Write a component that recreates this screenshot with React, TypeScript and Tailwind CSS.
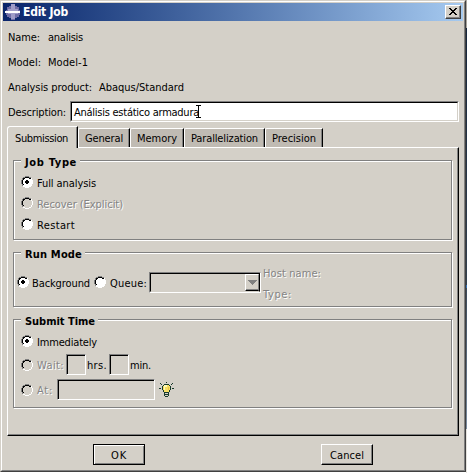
import { useLayoutEffect, useRef, useState } from "react";
import type { ReactNode } from "react";

const SUNKEN =
  "border border-t-[#808080] border-l-[#808080] border-r-white border-b-white";

/** A single line of text, tracked so that it takes up `w` pixels. */
function Label({ w, className = "", children }: { w: number; className?: string; children: string }) {
  const ref = useRef<HTMLSpanElement>(null);
  const [spacing, setSpacing] = useState(0);
  useLayoutEffect(() => {
    if (ref.current) {
      const natural = ref.current.getBoundingClientRect().width - spacing * children.length;
      setSpacing((w - natural) / children.length);
    }
  }, [w, children]);
  return (
    <span
      ref={ref}
      className={`inline-block h-[14px] shrink-0 whitespace-nowrap leading-[16px] ${className}`}
      style={{ letterSpacing: spacing }}
    >
      {children}
    </span>
  );
}

const DISABLED = "text-[#848484] [text-shadow:1px_1px_0_#fff]";

function Radio({ checked = false, disabled = false }: { checked?: boolean; disabled?: boolean }) {
  return (
    <svg width="12" height="12" viewBox="0 0 12 12" className="shrink-0" shapeRendering="crispEdges">
      <path d="M4 1h4v1h2v2h1v4h-1v2h-2v1h-4v-1h-2v-2h-1v-4h1v-2h2z" fill={disabled ? "#d4d0c8" : "#fff"} />
      <path d="M4 0h4v1h-4zM2 1h2v1h-2zM8 1h2v1h-2zM1 2h1v2h-1zM0 4h1v4h-1zM1 8h1v2h-1z" fill="#808080" />
      <path d="M4 1h4v1h-4zM2 2h2v1h-2zM8 2h2v1h-2zM2 3h1v1h-1zM1 4h1v4h-1zM2 8h1v1h-1z" fill="#000" />
      <path d="M10 2h1v2h-1zM11 4h1v4h-1zM10 8h1v2h-1zM8 10h2v1h-2zM4 11h4v1h-4zM2 10h2v1h-2z" fill="#fff" />
      {checked && <path d="M5 4h2v1h1v2h-1v1h-2v-1h-1v-2h1z" fill="#000" />}
    </svg>
  );
}

function Field({ className }: { className: string }) {
  return (
    <div className={`h-[21px] shrink-0 ${SUNKEN} ${className}`}>
      <div className="h-full border-l border-t border-black" />
    </div>
  );
}

function Group({ title, titleWidth, className, children }: { title: string; titleWidth: number; className: string; children: ReactNode }) {
  return (
    <section className={`relative border border-[#808080] shadow-[1px_1px_0_#fff,inset_1px_1px_0_#fff] ${className}`}>
      <div className="absolute -top-[6px] left-[7px] flex bg-[#d4d0c8] pl-[4px] pr-[3px]">
        <Label w={titleWidth} className="font-bold">{title}</Label>
      </div>
      {children}
    </section>
  );
}

function Tab({ w, className, children }: { w: number; className: string; children: string }) {
  return (
    <div className={`h-[19px] shrink-0 rounded-tl-[2px] border-l border-t border-r border-l-white border-t-white border-r-black bg-[#c0bbb3] pl-[6px] pt-[2px] shadow-[inset_-1px_0_0_#808080] ${className}`}>
      <Label w={w}>{children}</Label>
    </div>
  );
}

function Bulb() {
  return (
    <svg width="15" height="15" viewBox="0 0 15 15" className="ml-1 shrink-0" shapeRendering="crispEdges">
      <path d="M5 3h5v1h1v4h-1v2h-5v-2h-1v-4h1z" fill="#f8e064" />
      <path d="M5 3h3v2h-2v3h-1z" fill="#fffbb8" />
      <path d="M9 5h1v3h-1z" fill="#efc345" />
      <path
        d="M7 0h1v1h-1zM1 1h1v1h-1zM2 2h1v1h-1zM13 1h1v1h-1zM12 2h1v1h-1zM0 6h2v1h-2zM13 6h2v1h-2zM5 2h5v1h-5zM4 3h1v1h-1zM10 3h1v1h-1zM3 4h1v4h-1zM11 4h1v4h-1zM4 8h1v2h-1zM10 8h1v2h-1zM5 10h5v1h-5zM5 11h1v3h-1zM9 11h1v3h-1zM6 12h3v1h-3zM6 14h3v1h-3z"
        fill="#173a2b"
      />
    </svg>
  );
}

function TitleBar() {
  return (
    <header className="flex h-[18px] bg-linear-to-r from-[#0a246a] to-[#a6caf0] pl-[2px]">
      <svg width="16" height="16" viewBox="0 0 16 16" className="mt-px shrink-0" shapeRendering="crispEdges">
        <path d="M6 0h4v2h2v1h2v3h1v5h-1v2h-2v1h-2v2h-4v-2h-2v-1h-2v-2h-1v-5h1v-3h2v-1h2z" fill="#6f6da6" />
        <path d="M6 0h4v15h-4zM3 5h10v5h-10z" fill="#a09dc8" />
        <path d="M0 7h15v2h-15z" fill="#fff" />
      </svg>
      <Label w={45} className="ml-[2px] mt-[1px] text-[12px] font-bold text-white">Edit Job</Label>
      <button className="ml-auto mr-[2px] mt-[2px] flex h-[14px] w-4 border border-b-[#404040] border-l-white border-r-[#404040] border-t-white bg-[#d4d0c8] shadow-[inset_-1px_-1px_0_#808080]">
        <svg width="14" height="12" viewBox="0 0 14 12" shapeRendering="crispEdges">
          <path d="M3 2h2v1h1v1h2v-1h1v-1h2v1h-1v1h-1v1h-1v1h1v1h1v1h1v1h-2v-1h-1v-1h-2v1h-1v1h-2v-1h1v-1h1v-1h1v-1h-1v-1h-1v-1h-1z" fill="#000" />
        </svg>
      </button>
    </header>
  );
}

export default function App() {
  return (
    <div className="flex h-[473px] w-[467px] overflow-hidden bg-white font-['DejaVu_Sans_Condensed','DejaVu_Sans',sans-serif] text-[11px] text-black">
      <div className="h-[472px] w-[466px] shrink-0 border border-b-[#404040] border-l-[#d4d0c8] border-r-[#404040] border-t-[#d4d0c8]">
        <div className="h-full border border-b-[#808080] border-l-white border-r-[#808080] border-t-white bg-[#d4d0c8] p-px">
          <TitleBar />
          <div className="flex flex-col pl-[5px]">
            <div className="mt-[9px] flex h-[25px]">
              <Label w={32}>Name:</Label>
              <Label w={35} className="ml-2">analisis</Label>
            </div>
            <div className="flex h-[25px]">
              <Label w={33}>Model:</Label>
              <Label w={40} className="ml-[7px]">Model-1</Label>
            </div>
            <div className="flex h-[25px]">
              <Label w={84}>Analysis product:</Label>
              <Label w={85} className="ml-[7px]">Abaqus/Standard</Label>
            </div>
          </div>
          <div className="-mt-[4px] flex h-[21px] pl-[5px]">
            <Label w={58} className="mt-[4px]">Description:</Label>
            <div className={`ml-1 h-[21px] w-[389px] ${SUNKEN}`}>
              <div className="flex h-full border border-b-[#d4d0c8] border-l-black border-r-[#d4d0c8] border-t-black bg-white pl-[2px]">
                <Label w={125} className="mt-[2px]">Análisis estático armadura</Label>
                <svg width="5" height="13" viewBox="0 0 5 13" className="-ml-[3px] mt-[2px] shrink-0" shapeRendering="crispEdges">
                  <path d="M0 0h5v1h-2v11h2v1h-5v-1h2v-11h-2z" fill="#000" />
                </svg>
              </div>
            </div>
          </div>
          <nav className="relative z-10 mt-[4px] flex h-[22px] items-end pl-[4px]">
            <div className="h-[22px] w-[71px] shrink-0 rounded-tl-[3px] border-l border-r border-t border-l-white border-r-black border-t-white bg-[#d4d0c8] pl-[7px] pt-[4px] shadow-[inset_-1px_0_0_#808080]">
              <Label w={53}>Submission</Label>
            </div>
            <div className="mb-px flex">
              <Tab w={38} className="w-[52px]">General</Tab>
              <Tab w={40} className="w-[54px]">Memory</Tab>
              <Tab w={67} className="w-[81px]">Parallelization</Tab>
              <Tab w={44} className="w-[58px]">Precision</Tab>
            </div>
          </nav>
          <main className="-mt-px ml-[4px] h-[289px] w-[452px] border border-b-black border-l-white border-r-black border-t-white pl-[5px] pt-[12px] shadow-[inset_-1px_-1px_0_#808080]">
            <Group title="Job Type" titleWidth={52} className="h-[80px] w-[439px] pl-[7px] pt-[15px]">
              <div className="flex h-[21px]"><Radio checked /><Label w={59} className="ml-1">Full analysis</Label></div>
              <div className="flex h-[21px]"><Radio disabled /><Label w={86} className={`ml-1 ${DISABLED}`}>Recover (Explicit)</Label></div>
              <div className="flex h-[21px]"><Radio /><Label w={38} className="ml-1">Restart</Label></div>
            </Group>
            <Group title="Run Mode" titleWidth={57} className="mt-[12px] flex h-[55px] w-[439px] pl-[3px]">
              <div className="mt-[23px] flex">
                <Radio checked /><Label w={58} className="ml-[3px]">Background</Label>
                <span className="w-1" />
                <Radio /><Label w={37} className="ml-1">Queue:</Label>
              </div>
              <div className={`ml-[2px] mt-[19px] h-[21px] w-[112px] shrink-0 ${SUNKEN}`}>
                <div className="flex h-full justify-end border border-black border-b-[#d4d0c8]">
                  <div className="flex h-[17px] w-[14px] items-center justify-center border border-b-black border-l-white border-r-[#808080] border-t-white shadow-[inset_0_-1px_0_#808080]">
                    <svg width="9" height="5" viewBox="0 0 9 5" shapeRendering="crispEdges">
                      <path d="M0 0h9v1h-1v1h-1v1h-1v1h-1v1h-1v-1h-1v-1h-1v-1h-1v-1h-1z" fill="#808080" />
                    </svg>
                  </div>
                </div>
              </div>
              <div className="ml-[2px] mt-[13px] flex flex-col">
                <Label w={58} className={`mb-[7px] self-start ${DISABLED}`}>Host name:</Label>
                <Label w={29} className={`self-start ${DISABLED}`}>Type:</Label>
              </div>
            </Group>
            <Group title="Submit Time" titleWidth={70} className="mt-[12px] h-[89px] w-[439px] pl-[7px] pt-[15px]">
              <div className="flex h-[19px]"><Radio checked /><Label w={60} className="ml-1">Immediately</Label></div>
              <div className="flex h-[21px] items-center">
                <Radio disabled /><Label w={27} className={`ml-1 ${DISABLED}`}>Wait:</Label>
                <Field className="ml-[2px] w-[20px]" /><Label w={20} className="ml-px">hrs.</Label>
                <Field className="ml-[2px] w-[20px]" /><Label w={21} className="ml-px">min.</Label>
              </div>
              <div className="mt-[4px] flex h-[21px] items-center">
                <Radio disabled /><Label w={16} className={`ml-1 ${DISABLED}`}>At:</Label>
                <Field className="ml-[4px] w-[98px]" />
                <Bulb />
              </div>
            </Group>
          </main>
          <footer className="mt-[8px] flex justify-between pl-[90px] pr-[90px]">
            <button className="flex h-[21px] w-[52px] justify-center border border-black pt-[3px] shadow-[inset_1px_1px_0_#fff,inset_-1px_-1px_0_#808080]">
              <Label w={16}>OK</Label>
            </button>
            <button className="flex h-[21px] w-[52px] justify-center border border-b-black border-l-white border-r-black border-t-white pt-[3px] shadow-[inset_-1px_-1px_0_#808080]">
              <Label w={34}>Cancel</Label>
            </button>
          </footer>
        </div>
      </div>
      <div className="flex w-px flex-col">
        <div className="h-[28px] bg-[#a8a49c]" />
        <div className="h-[257px] bg-linear-to-b from-[#16263d] to-[#34414f]" />
        <div className="h-[3px] bg-[#2f6fb5]" />
        <div className="h-[141px] bg-linear-to-b from-[#3c4a5a] to-[#7a8ca0]" />
        <div className="h-[44px] bg-[#e4e2dd]" />
      </div>
    </div>
  );
}
